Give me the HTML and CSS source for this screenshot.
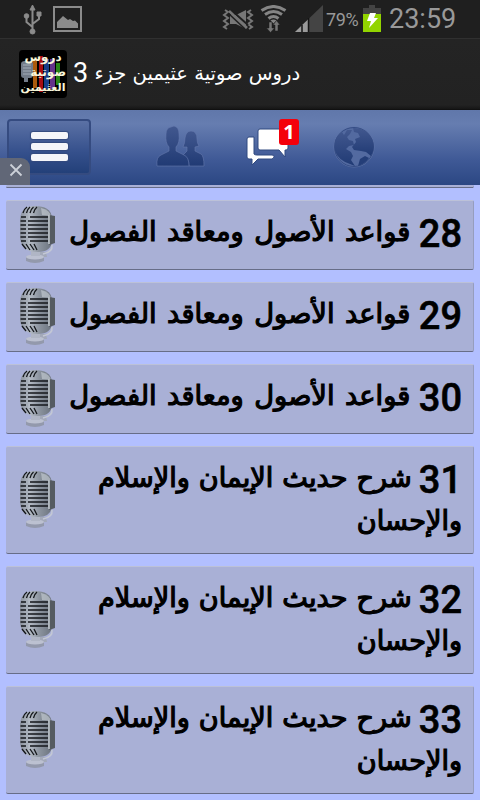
FILE: index.html
```
<!DOCTYPE html>
<html lang="ar">
<head>
  <meta charset="utf-8">
  <title>دروس صوتية عثيمين جزء 3</title>
  <meta name="viewport" content="width=device-width, initial-scale=1">
  <link rel="stylesheet" href="styles.css">
</head>
<body>
  <svg class="defs" width="0" height="0">
    <defs>
      <linearGradient id="metal" x1="0" x2="1" y1="0" y2="0">
        <stop offset="0" stop-color="#8a919c"/>
        <stop offset=".3" stop-color="#b4bbc5"/>
        <stop offset=".6" stop-color="#8c949f"/>
        <stop offset="1" stop-color="#6b737e"/>
      </linearGradient>
      <linearGradient id="dark" x1="0" x2="0" y1="0" y2="1">
        <stop offset="0" stop-color="#42588f"/>
        <stop offset="1" stop-color="#203a74"/>
      </linearGradient>
    </defs>
    <symbol id="mic" viewBox="0 0 40 60">
      <path d="M16 47h12l1 5H15z" fill="#a3a9b9"/>
      <path d="M34 40q1 7-9 9" fill="none" stroke="#c3c8d5" stroke-width="1.5"/>
      <path d="M8 52q9-4 18 0v4q-9 4-18 0z" fill="#9399ac"/>
      <ellipse cx="17" cy="52" rx="9" ry="2.5" fill="#bcc1d1"/>
      <path d="M13 45h9v6h-9z" fill="#b0b6c5"/>
      <path d="M2 14Q3 1 17 1q15 0 17 11v24q-1 11-14 11Q3 47 2 33z" fill="url(#metal)"/>
      <path d="M23 3q9 2 10 8l-9-1z" fill="#cbd2d8" opacity=".6"/>
      <g stroke="#14171b" stroke-width="1.7" fill="none">
        <path d="M5 8q1-4 4-6M8.500 8q1-4 3.500-6M12 8q1-4 3.500-6M15.500 8q1-4 3.500-6" stroke-width="1.300"/>
        <path d="M3 12h5M2.500 16h5.500M2.500 20h5.500M2.500 24h5.500M2.500 28h5.500M2.500 32h5.500M3 36h5"/>
        <path d="M12 12h18M10 16h20M10 20h20M10 24h20M10 28h20M10 32h20M12 36h18"/>
        <path d="M4 39l4 5M8 39l4 6M12 39l4 6M16 39l3 6" stroke-width="1.300"/>
      </g>
      <path d="M9 10v28" stroke="#a5adb7" stroke-width="2"/>
      <path d="M31 10l6 1v27l-6 2z" fill="#555b61"/>
      <path d="M31 10v29" stroke="#c5cbd0" stroke-width="1.500"/>
    </symbol>
  </svg>

  <div class="status">
    <svg class="usb" width="20" height="30" viewBox="0 0 20 30" fill="#8b8b8b" stroke="#8b8b8b">
      <path d="M9.500 26V4M9.500 22l-6-5v-5M9.500 19l6.500-5v-5" fill="none" stroke-width="2"/>
      <path d="M9.500 0l2.500 5H7z" stroke-width="1"/>
      <circle cx="9.500" cy="26.500" r="2.500"/><circle cx="3.500" cy="11" r="2.300"/>
      <path d="M14 7h4v4h-4z" stroke-width="1"/>
    </svg>
    <svg class="pic" width="29" height="26" viewBox="0 0 29 26">
      <path d="M1 1h27v24H1z" fill="none" stroke="#8b8b8b" stroke-width="2"/>
      <path d="M4 22v-6l6-6 5 4 2-1 3 2 2-.500 3 3v4.500z" fill="#8b8b8b"/>
    </svg>
    <span class="gap"></span>
    <svg class="mute" width="33" height="22" viewBox="0 0 33 22">
      <path d="M3 1l3 2-4 3 4 3-4 3 4 3-4 3 3 2M29 1l-3 2 4 3-4 3 4 3-4 3 4 3-3 2" fill="none" stroke="#777" stroke-width="2"/>
      <path d="M8 6h6l10-5v19l-10-5H8z" fill="#777"/>
      <path d="M8 0l18 16" stroke="#1f1f1f" stroke-width="2"/>
      <path d="M7 2l18 17" stroke="#777" stroke-width="2.500"/>
      <path d="M6 4l17 16" stroke="#1f1f1f" stroke-width="1.500"/>
    </svg>
    <svg class="wifi" width="27" height="28" viewBox="0 0 27 28">
      <g fill="none" stroke="#858585" stroke-width="3">
        <path d="M1.500 5.500q12-8 24 0M5 9.500q8.500-6 17 0M8.500 13.500q5-4 10 0"/>
      </g>
      <path d="M10.500 15.500q3-2 6 0l-3 3z" fill="#858585"/>
      <path d="M9 17v6H6.500l4 4.500 4-4.500H12v-6zM15 26v-6h-2l3.500-4.500L20 20h-2v6z" fill="#777" stroke="#1f1f1f" stroke-width=".5"/>
    </svg>
    <svg class="signal" width="28" height="28" viewBox="0 0 28 28">
      <path d="M28 0v27H0z" fill="#444"/>
      <path d="M14 13.500V27H0z" fill="#9a9a9a"/>
      <path d="M7 20v7M13.500 13v14" stroke="#151515" stroke-width="1.500"/>
    </svg>
    <span class="pct">79%</span>
    <svg class="battery" width="18" height="27" viewBox="0 0 18 27">
      <path d="M0 3h6V0h6v3h6v6H0z" fill="#434343"/>
      <path d="M0 9h18v18H0z" fill="#92d400"/>
      <path d="M7 8h6l-2 5h4L6 23l2-7H4z" fill="#fff"/>
    </svg>
    <span class="clock">23:59</span>
  </div>

  <div class="titlebar">
    <div class="logo">
      <svg width="48" height="48" viewBox="0 0 48 48">
        <path d="M14 9h4v29h-4z" fill="#ab5a0c"/>
        <path d="M20 6h4v36h-4z" fill="#a60d12"/>
        <path d="M25 9h5v30h-5z" fill="#173f88"/>
        <path d="M31 9h5v30h-5z" fill="#64338b"/>
        <path d="M37 13h4v22h-4z" fill="#288318"/>
        <path d="M2 14q0-3 4-3h5q3 0 3 3v11q0 3-3 3H9v4H5v-4q-3 0-3-3z" fill="#737c89"/>
        <path d="M4 15h8M4 18h8M4 21h8M4 24h8" stroke="#a4adb9"/>
      </svg>
      <p class="logo-text"><span>دروس</span><span class="mid">صوتية</span><span class="low">العثيمين</span></p>
    </div>
    <h1 dir="rtl">دروس صوتية عثيمين جزء <b>3</b></h1>
  </div>

  <div class="nav">
    <div class="menu"><i></i><i></i><i></i></div>
    <svg class="friends" width="49" height="42" viewBox="0 0 49 42" fill="url(#dark)" stroke="#6479ac" stroke-width=".6">
      <path d="M27 22q2-4 2-9 1-7 6-7 6 0 6 8 0 4 2 7l-4 1v4l6 3q3 2 3 12H33q0-8-6-11l4-4v-4z"/>
      <path d="M1 41q-1-9 4-11l8-4v-4q-4-4-3-13 0-6 5-7l3-1q5 1 5 8 1 9-3 13v4l8 4q5 2 5 11z"/>
    </svg>
    <div class="chat">
      <svg width="44" height="40" viewBox="0 0 44 40">
        <path d="M3 9h5v17q1 1 3 1h15q2 0 2 1.500T26 31H12l-6 6v-6H3q-2 0-2-2V11q0-2 2-2z" fill="#fff" stroke="#314a80"/>
        <path d="M14 1h26q2 0 2 2v17q0 2-2 2h-1v7l-6-7H14q-2 0-2-2V3q0-2 2-2z" fill="#fff" stroke="#314a80"/>
      </svg>
      <span class="badge">1</span>
    </div>
    <svg class="globe" width="42" height="42" viewBox="0 0 42 42">
      <circle cx="21" cy="21" r="20" fill="#536aa0" stroke="#6075a7" stroke-width=".8"/>
      <circle cx="21" cy="21" r="19.500" fill="none" stroke="#354d86"/>
      <path d="M2 15q2-6 7-9l2 3 3-5h5l-2 4-3 3 2 3 4 1 1 4-5 1-3 3 5 3 2 4-2 4 4 6-5-2Q5 34 2 25z" fill="url(#dark)"/>
      <path d="M20 2q13-1 19 11 4 9-1 17l-5-4-5-1-7-1-2-3 4-5-1-3 5-2-2-4-4-1z" fill="url(#dark)"/>
      <path d="M25 40l2-7 5-3 4 2q-4 6-11 8z" fill="#243e78"/>
    </svg>
    <span class="close">
      <svg width="14" height="14" viewBox="0 0 14 14"><path d="M1.500 1.500l11 11M12.500 1.500l-11 11" stroke="#ccd0d8" stroke-width="1.800"/></svg>
    </span>
  </div>

  <div class="list" dir="rtl">
    <div class="item tail"></div>
    <div class="item">
      <p><b>28</b> قواعد الأصول ومعاقد الفصول</p>
      <svg class="mic"><use href="#mic"/></svg>
    </div>
    <div class="item">
      <p><b>29</b> قواعد الأصول ومعاقد الفصول</p>
      <svg class="mic"><use href="#mic"/></svg>
    </div>
    <div class="item">
      <p><b>30</b> قواعد الأصول ومعاقد الفصول</p>
      <svg class="mic"><use href="#mic"/></svg>
    </div>
    <div class="item tall">
      <p><b>31</b> شرح حديث الإيمان والإسلام</p>
      <p>والإحسان</p>
      <svg class="mic"><use href="#mic"/></svg>
    </div>
    <div class="item tall">
      <p><b>32</b> شرح حديث الإيمان والإسلام</p>
      <p>والإحسان</p>
      <svg class="mic"><use href="#mic"/></svg>
    </div>
    <div class="item tall">
      <p><b>33</b> شرح حديث الإيمان والإسلام</p>
      <p>والإحسان</p>
      <svg class="mic"><use href="#mic"/></svg>
    </div>
  </div>
</body>
</html>
```
FILE: styles.css
```
* { margin: 0; padding: 0; box-sizing: border-box; }
body { width: 480px; height: 800px; overflow: hidden; display: flex; flex-direction: column; background: #b2bfff; font-family: "DejaVu Sans", sans-serif; }
svg { display: block; flex: none; }
.defs { position: absolute; }

.status { height: 39px; flex: none; display: flex; align-items: flex-start; background: #1f1f1f; border-bottom: 1px solid #303030; color: #999; font-family: Roboto, sans-serif; }
.usb { margin: 5px 0 0 23px; }
.pic { margin: 6px 0 0 10px; }
.gap { flex: 1; }
.mute { margin-top: 9px; }
.wifi { margin: 5px 0 0 5px; }
.signal { margin: 5px 0 0 8px; }
.pct { width: 38px; margin-left: 3px; font-size: 18px; line-height: 39px; letter-spacing: -.4px; white-space: nowrap; }
.battery { margin: 5px 0 0 -1px; }
.clock { width: 99px; padding-left: 8px; font-size: 27px; line-height: 38px; white-space: nowrap; }

.titlebar { height: 71px; flex: none; display: flex; align-items: center; padding-left: 19px; background: linear-gradient(#242424, #222 66px, #161616); border-bottom: 1px solid #111; }
.logo { width: 48px; height: 48px; display: grid; border-radius: 4px; background: #000; }
.logo > * { grid-area: 1 / 1; }
.logo-text { z-index: 1; display: flex; flex-direction: column; align-items: center; color: #f8f6da; font-size: 12px; font-weight: bold; line-height: 14px; direction: rtl; white-space: nowrap; }
.logo-text .mid { align-self: flex-start; margin-right: 1px; line-height: 17px; }
.logo-text .low { font-size: 11px; }
.titlebar h1 { margin-left: 6px; color: #fff; font-size: 19.5px; font-weight: normal; line-height: 40px; white-space: nowrap; }
.titlebar b { font: 27px Roboto, sans-serif; vertical-align: -2px; }

.nav { position: relative; height: 75px; flex: none; display: flex; align-items: flex-start; background: linear-gradient(#6077aa, #667db0 14px, #3f5996 50px, #2b4783); }
.menu { width: 84px; height: 56px; margin: 9px 0 0 7px; padding: 0 0 2px 22px; display: flex; flex-direction: column; justify-content: center; gap: 4px; border: 2px solid #354b80; border-radius: 4px; background: linear-gradient(#5b71a5, #35508c 60%, #234079); }
.menu i { width: 37px; height: 7px; border-radius: 2px; background: #f4f5f9; box-shadow: 0 0 1px 1px #344a7e; }
.friends { margin: 15px 0 0 65px; }
.chat { position: relative; margin: 18px 0 0 41px; }
.badge { position: absolute; left: 33px; top: -9px; width: 20px; height: 26px; border-radius: 3px; background: #f4000b; color: #fff; font: bold 20px/26px "Open Sans", sans-serif; text-align: center; }
.globe { margin: 16px 0 0 43px; }
.close { position: absolute; left: 0; bottom: 0; width: 30px; height: 27px; padding: 5px 0 0 9px; border-radius: 0 9px 0 0; background: #616777; }

.list { display: flex; flex-direction: column; gap: 12px; padding: 0 6px; }
.item { height: 70px; flex: none; display: grid; grid-template-columns: 1fr 40px; grid-auto-rows: 43px; padding: 9px 11px 0 12px; background: #a9b0d6; border-top: 1px solid #bcc1d8; border-bottom: 1px solid #676d88; border-right: 1px solid #969dbd; border-radius: 2px; }
.item p { grid-column: 1; width: 0; color: #000; font-size: 27.3px; line-height: 43px; word-spacing: 1.8px; white-space: nowrap; -webkit-text-stroke: 1.2px #000; }
.item b { margin-left: -2px; font: 500 38px/30px Roboto, sans-serif; vertical-align: -6px; -webkit-text-stroke: .6px #000; }
.mic { grid-column: 2; grid-row: 1; width: 40px; height: 60px; margin-top: -5px; }
.tail { height: 3px; padding: 0; border-top: 0; }
.tall { height: 108px; }
.tall p { font-size: 27.1px; word-spacing: .5px; }
.tall .mic { margin-top: 14px; }
```
